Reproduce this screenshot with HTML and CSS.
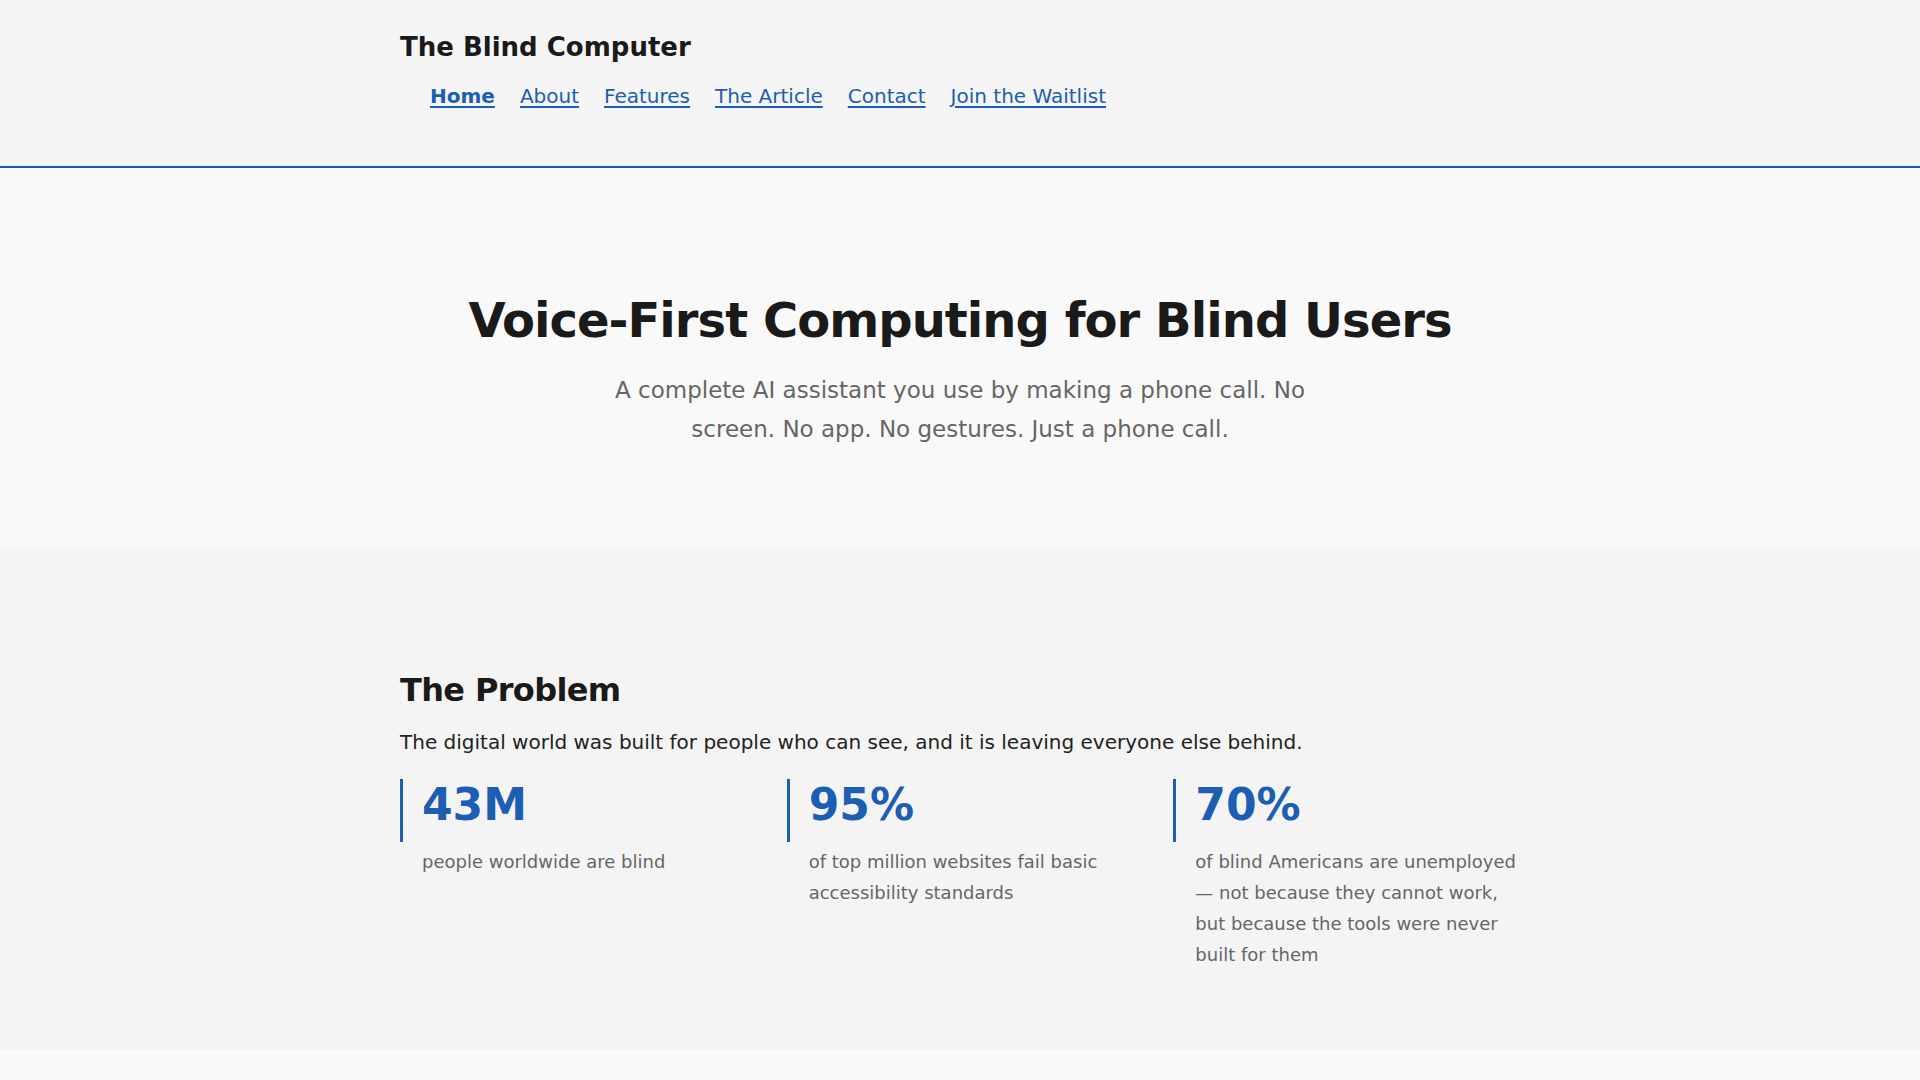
FILE: index.html
```html
<!DOCTYPE html>
<html lang="en">
<head>
<meta charset="utf-8">
<title>The Blind Computer</title>
<link rel="stylesheet" href="styles.css">
</head>
<body>
<header class="site-header">
  <div class="container">
    <div class="logo">The Blind Computer</div>
    <nav class="main-nav" aria-label="Main">
      <ul class="nav-list">
        <li><a class="nav-link current" href="#">Home</a></li>
        <li><a class="nav-link" href="#">About</a></li>
        <li><a class="nav-link" href="#">Features</a></li>
        <li><a class="nav-link" href="#">The Article</a></li>
        <li><a class="nav-link" href="#">Contact</a></li>
        <li><a class="nav-link" href="#">Join the Waitlist</a></li>
      </ul>
    </nav>
  </div>
</header>
<main>
  <section class="hero">
    <div class="container">
      <h1 class="hero-title">Voice-First Computing for Blind Users</h1>
      <p class="hero-sub">A complete AI assistant you use by making a phone call. No screen. No app. No gestures. Just a phone call.</p>
    </div>
  </section>
  <section class="problem">
    <div class="container">
      <h2 class="section-title">The Problem</h2>
      <p class="section-lead">The digital world was built for people who can see, and it is leaving everyone else behind.</p>
      <div class="stats">
        <div class="stat">
          <div class="stat-number">43M</div>
          <p class="stat-label">people worldwide are blind</p>
        </div>
        <div class="stat">
          <div class="stat-number">95%</div>
          <p class="stat-label">of top million websites fail basic accessibility standards</p>
        </div>
        <div class="stat">
          <div class="stat-number">70%</div>
          <p class="stat-label">of blind Americans are unemployed — not because they cannot work, but because the tools were never built for them</p>
        </div>
      </div>
    </div>
  </section>
  <section class="next-section"></section>
</main>
</body>
</html>
```
FILE: styles.css
```css
* { box-sizing: border-box; }

html, body {
  margin: 0;
  padding: 0;
}

body {
  font-family: "DejaVu Sans", "Noto Sans", sans-serif;
  font-size: 20px;
  line-height: 1.7;
  color: #1a1a1a;
  background: #fafafa;
}

.container {
  width: 1120px;
  margin: 0 auto;
}

/* Header */
.site-header {
  background: #f5f5f5;
  border-bottom: 2px solid #1b5eb4;
  padding: 25px 0 0;
  height: 168px;
}

.logo {
  font-size: 26px;
  font-weight: bold;
  line-height: 44px;
  color: #1a1a1a;
}

.main-nav {
  margin-top: 10px;
}

.nav-list {
  list-style: none;
  margin: 0;
  padding: 0 0 0 30px;
  display: flex;
  gap: 25px;
}

.nav-link {
  color: #1b5eb4;
  font-size: 20px;
  line-height: 34px;
  text-decoration: underline;
  text-decoration-thickness: 2px;
  text-underline-offset: 3px;
}

.nav-link.current {
  font-weight: bold;
}

/* Hero */
.hero {
  background: #f9f9f9;
  padding: 124.4px 0 98.9px;
  text-align: center;
}

.hero-title {
  margin: 0;
  font-size: 48px;
  line-height: 57.6px;
  letter-spacing: -0.02em;
  font-weight: bold;
  color: #1a1a1a;
}

.hero-sub {
  margin: 21.3px auto 0;
  max-width: 720px;
  font-size: 23px;
  line-height: 39.1px;
  color: #666666;
}

/* Problem */
.problem {
  background: #f4f4f4;
  padding: 122.6px 0 80.2px;
}

.section-title {
  margin: 0;
  font-size: 32px;
  line-height: 38.4px;
  letter-spacing: -0.02em;
  font-weight: bold;
  color: #1a1a1a;
}

.section-lead {
  margin: 15.6px 0 0;
  font-size: 20px;
  line-height: 34px;
  color: #222222;
}

.stats {
  margin-top: 19.8px;
  display: grid;
  grid-template-columns: repeat(3, 1fr);
  gap: 40px;
}

.stat-number {
  border-left: 3px solid #1b5eb4;
  padding: 0 0 10px 19px;
  font-size: 44px;
  line-height: 52.8px;
  font-weight: bold;
  color: #1b5eb4;
}

.stat-label {
  margin: 4.2px 0 0;
  padding-left: 22px;
  font-size: 18px;
  line-height: 31px;
  color: #666666;
}

.next-section {
  background: #fafafa;
  min-height: 200px;
}
```
